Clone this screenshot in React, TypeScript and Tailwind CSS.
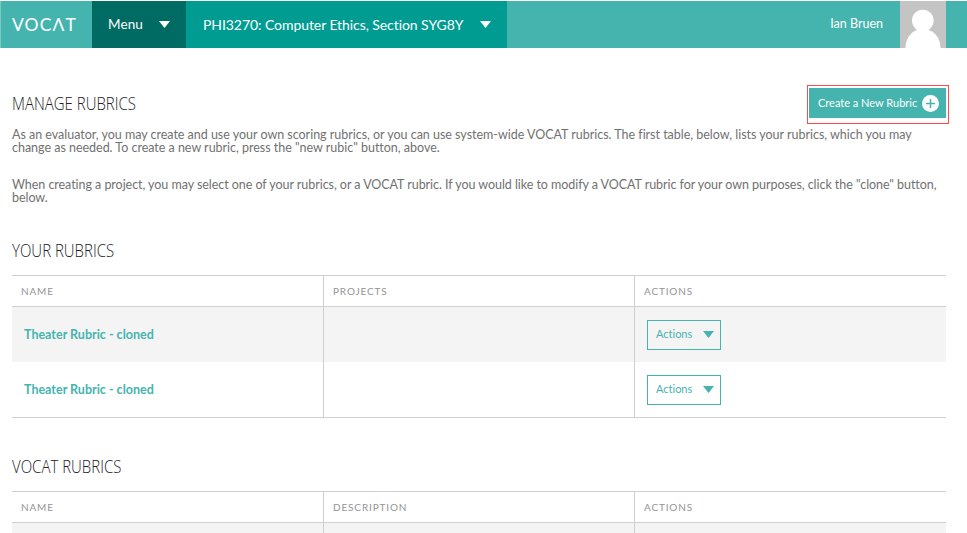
import React from "react";

function Caret({ className }: { className: string }) {
  return (
    <svg viewBox="0 0 11 7" className={className} fill="currentColor" aria-hidden="true">
      <path d="M0 0h11L5.5 7z" />
    </svg>
  );
}

function Header() {
  return (
    <header className="mt-px flex h-[47px] bg-[#45b4ae] text-white">
      <div className="flex w-[92px] items-center border-l border-[#7ccac5] pl-[11px]">
        <span className="text-[17.5px] leading-none tracking-[1.1px]">VOCΛT</span>
      </div>
      <button className="flex w-[94px] items-center bg-[#006b63] pl-4 text-[13.5px]">
        <span className="w-[51px] text-left tracking-[0.1px]">Menu</span>
        <Caret className="h-[7px] w-[11px]" />
      </button>
      <button className="flex w-[321px] items-center bg-[#009c92] pl-[17px] text-[14px]">
        <span className="w-[277px] whitespace-nowrap text-left tracking-[-0.07px]">
          PHI3270: Computer Ethics, Section SYG8Y
        </span>
        <Caret className="h-[7px] w-[11px]" />
      </button>
      <div className="ml-auto flex items-center pr-[21px]">
        <span className="mr-[17px] text-[12.5px]">Ian Bruen</span>
        <svg viewBox="0 0 46 47" className="h-[47px] w-[46px]">
          <path fill="#c4c4c4" d="M0 0h46v47H0z" />
          <circle cx="22.8" cy="19.5" r="10.8" fill="#fff" />
          <path fill="#fff" d="M5.5 47c0-11 7-19 17.3-19S40.5 36 40.5 47z" />
        </svg>
      </div>
    </header>
  );
}

function Title({ children }: { children: React.ReactNode }) {
  return (
    <h2 className="h-6 text-[18.5px] leading-6 text-[#222]">
      <span className="inline-block origin-left scale-x-[0.81] whitespace-nowrap font-['Open_Sans'] font-[340]">
        {children}
      </span>
    </h2>
  );
}

function HeadRow({ labels }: { labels: string[] }) {
  return (
    <div className="grid h-8 grid-cols-[311px_311px_1fr] border-y border-[#cfcfcf] text-[10px] leading-[30px] tracking-[0.85px] text-[#949494]">
      {labels.map((label, i) => (
        <div key={label} className={i === 0 ? "pl-[9px]" : "border-l border-[#cfcfcf] pl-[9px]"}>
          {label}
        </div>
      ))}
    </div>
  );
}

function RubricRow({ shaded }: { shaded: boolean }) {
  return (
    <div className={`grid h-[55px] grid-cols-[311px_311px_1fr] ${shaded ? "bg-[#f4f4f4]" : "bg-white"}`}>
      <a className="pl-3 text-[12.5px] font-bold leading-[55px] text-[#45b4ae]">Theater Rubric - cloned</a>
      <div className="border-l border-[#cfcfcf]" />
      <div className="flex items-center border-l border-[#cfcfcf] pl-3">
        <button className="flex h-[30px] w-[74px] items-center border border-[#45b4ae] pl-2 text-[11px] text-[#45b4ae]">
          <span className="w-[47px] text-left">Actions</span>
          <Caret className="h-[7px] w-[11px]" />
        </button>
      </div>
    </div>
  );
}

function BlankRow() {
  return (
    <div className="grid h-[11px] grid-cols-[311px_311px_1fr] bg-[#f4f4f4]">
      <div />
      <div className="border-l border-[#cfcfcf]" />
      <div className="border-l border-[#cfcfcf]" />
    </div>
  );
}

export default function App() {
  return (
    <div className="h-[533px] overflow-hidden bg-white font-['Lato',sans-serif] [font-variant-ligatures:none]">
      <Header />
      <main className="pl-3 pr-[21px]">
        <div className="flex h-[76px] justify-between pt-[37px]">
          <div className="pt-[6px]">
            <Title>MANAGE RUBRICS</Title>
          </div>
          <div className="-mr-[3px] flex h-[39px] w-[142px] border border-[#ff4b4b] pl-px pt-[2px]">
            <button className="flex h-[30px] w-[137px] items-center bg-[#45b4ae] pl-[9px] text-[11px] text-white">
              <span className="w-[104px] whitespace-nowrap text-left">Create a New Rubric</span>
              <svg viewBox="0 0 17 17" className="size-[17px]">
                <circle cx="8.5" cy="8.5" r="8.5" fill="#fff" />
                <path d="M8.5 4v9M4 8.5h9" stroke="#45b4ae" strokeWidth="1.5" />
              </svg>
            </button>
          </div>
        </div>
        <div className="whitespace-nowrap pt-[5px] text-[12.5px] leading-[12.5px] text-[#717171]">
          <p className="tracking-[-0.02px]">
            As an evaluator, you may create and use your own scoring rubrics, or you can use system-wide VOCAT rubrics. The first table, below, lists your rubrics, which you may
            <br />
            change as needed. To create a new rubric, press the "new rubic" button, above.
          </p>
          <p className="pt-[25px] tracking-[-0.05px]">
            When creating a project, you may select one of your rubrics, or a VOCAT rubric. If you would like to modify a VOCAT rubric for your own purposes, click the "clone" button,
            <br />
            below.
          </p>
        </div>
        <section className="pt-[34px]">
          <Title>YOUR RUBRICS</Title>
          <div className="mt-[13px] border-b border-[#cfcfcf]">
            <HeadRow labels={["NAME", "PROJECTS", "ACTIONS"]} />
            <RubricRow shaded />
            <RubricRow shaded={false} />
          </div>
        </section>
        <section className="pt-9">
          <Title>VOCAT RUBRICS</Title>
          <div className="mt-[13px]">
            <HeadRow labels={["NAME", "DESCRIPTION", "ACTIONS"]} />
            <BlankRow />
          </div>
        </section>
      </main>
    </div>
  );
}
